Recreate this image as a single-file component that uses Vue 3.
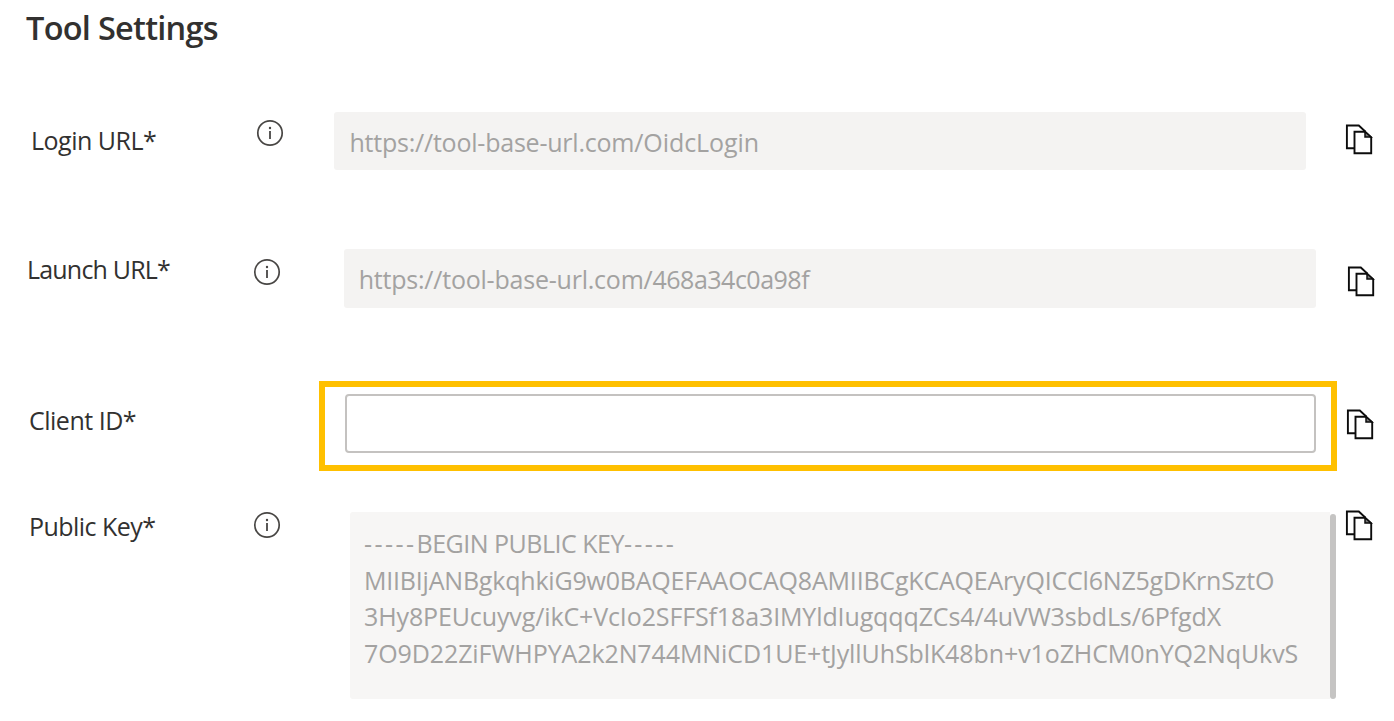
<script setup>
const rows = [
  { id: 'login', label: 'Login URL*', info: true, base: 'https://tool-base-url.com/', path: 'OidcLogin' },
  { id: 'launch', label: 'Launch URL*', info: true, base: 'https://tool-base-url.com/', path: '468a34c0a98f' },
  { id: 'client', label: 'Client ID*', info: false },
  {
    id: 'key',
    label: 'Public Key*',
    info: true,
    lines: [
      'MIIBIjANBgkqhkiG9w0BAQEFAAOCAQ8AMIIBCgKCAQEAryQICCl6NZ5gDKrnSztO',
      '3Hy8PEUcuyvg/ikC+VcIo2SFFSf18a3IMYldIugqqqZCs4/4uVW3sbdLs/6PfgdX',
      '7O9D22ZiFWHPYA2k2N744MNiCD1UE+tJyllUhSblK48bn+v1oZHCM0nYQ2NqUkvS'
    ]
  }
]
</script>

<template>
  <main class="page">
    <h1 class="title"><span>Tool Settings</span></h1>
    <section v-for="row in rows" :key="row.id" class="row" :class="row.id">
      <div class="label"><span>{{ row.label }}</span></div>
      <div class="info">
        <svg v-if="row.info" width="28" height="28" viewBox="0 0 28 28">
          <circle cx="14" cy="14" r="12.2" fill="none" stroke="#484644" stroke-width="1.7" />
          <path d="M14 12V20" stroke="#484644" stroke-width="1.8" />
          <circle cx="14" cy="9" r="1.2" fill="#484644" />
        </svg>
      </div>
      <div v-if="row.base" class="field"><span class="base">{{ row.base }}</span><span class="path">{{ row.path }}</span></div>
      <div v-else-if="row.lines" class="keybox">
        <div class="keytext">
          <div class="line head"><span class="dashes">-----</span><span>BEGIN PUBLIC KEY</span><span class="dashes">-----</span></div>
          <div v-for="(line, i) in row.lines" :key="i" class="line" :class="'line' + i"><span>{{ line }}</span></div>
        </div>
        <div class="scrollbar"></div>
      </div>
      <div v-else class="highlight"><div class="blank"></div></div>
      <svg class="copy" width="28" height="32" viewBox="0 0 28 32">
        <path d="M9.5 24.3H1.9V1.5H13.8L20.5 7.7" />
        <path d="M9.5 7.7H20L26.2 13.3V29.3H9.5Z" />
        <path class="fold" d="M20 7.7V12.9H26Z" />
      </svg>
    </section>
  </main>
</template>

<style>
body { background: #fff; }
</style>

<style scoped>
.page {
  box-sizing: border-box;
  width: 1394px;
  height: 721px;
  overflow: hidden;
  background: #fff;
  font-family: "Open Sans", "Noto Sans", sans-serif;
  font-size: 25px;
  color: #323130;
  white-space: nowrap;
}
.title {
  box-sizing: border-box;
  margin: 0;
  padding: 6px 0 0 26px;
  height: 94px;
  font-size: 32.5px;
  line-height: 44px;
  font-weight: 600;
  letter-spacing: -0.73px;
}
.row { display: flex; align-items: flex-start; }
.login { height: 140px; }
.launch { height: 140px; }
.client { height: 131px; }
.key { height: 216px; }
.label { line-height: 34px; flex: none; letter-spacing: -0.5px; }
.info { width: 28px; height: 28px; flex: none; }
.info svg, .copy { display: block; }
.login .label { width: 225.4px; margin: 29px 0 0 31px; }
.launch .label { width: 226px; margin: 18px 0 0 27px; letter-spacing: -0.8px; }
.client .label { width: 225px; margin: 29px 0 0 29px; }
.key .label { width: 224px; margin: 4px 0 0 29px; letter-spacing: -0.55px; }
.login .info { margin-top: 25px; }
.launch .info { margin-top: 24.4px; }
.key .info { margin-top: 5.5px; }
.field {
  box-sizing: border-box;
  flex: none;
  width: 972px;
  height: 58.5px;
  padding: 13px 0 0 15px;
  border-radius: 3px;
  background: #f4f3f2;
  color: #a3a2a1;
  line-height: 34px;
}
.base { letter-spacing: -0.22px; }
.login .path { letter-spacing: -0.05px; }
.launch .path { letter-spacing: -0.5px; }
.login .field { margin: 17.5px 0 0 50px; }
.launch .field { margin: 15px 0 0 62.7px; }
.highlight {
  box-sizing: border-box;
  flex: none;
  width: 1018px;
  height: 90px;
  margin: 7px 0 0 37px;
  border: 6px solid #ffc000;
  padding: 7.4px 0 0 20.4px;
}
.blank {
  box-sizing: border-box;
  width: 970.5px;
  height: 59px;
  border: 2px solid #c4c2c0;
  border-radius: 4px;
}
.keybox { display: flex; flex: none; margin: 7px 0 0 69px; width: 986px; }
.keytext {
  box-sizing: border-box;
  width: 980px;
  height: 187px;
  padding: 13px 0 0 14px;
  border-radius: 3px 0 0 3px;
  background: #f7f6f5;
  color: #a3a2a1;
}
.line { height: 36.7px; line-height: 36.7px; }
.head { letter-spacing: -0.5px; }
.dashes { letter-spacing: 2.45px; }
.line0 { letter-spacing: -0.2px; }
.line1 { letter-spacing: -0.12px; }
.line2 { letter-spacing: -0.1px; }
.scrollbar { width: 6px; height: 185px; margin-top: 2px; border-radius: 3px; background: #c5c4c3; }
.copy { flex: none; fill: none; stroke: #0c0c0c; stroke-width: 1.9; }
.copy .fold { fill: #777; stroke-width: 1.5; }
.login .copy { margin: 29.5px 0 0 38.6px; }
.launch .copy { margin: 32px 0 0 31.7px; }
.client .copy { margin: 35px 0 0 9px; }
.key .copy { margin: 5px 0 0 9px; }
</style>
